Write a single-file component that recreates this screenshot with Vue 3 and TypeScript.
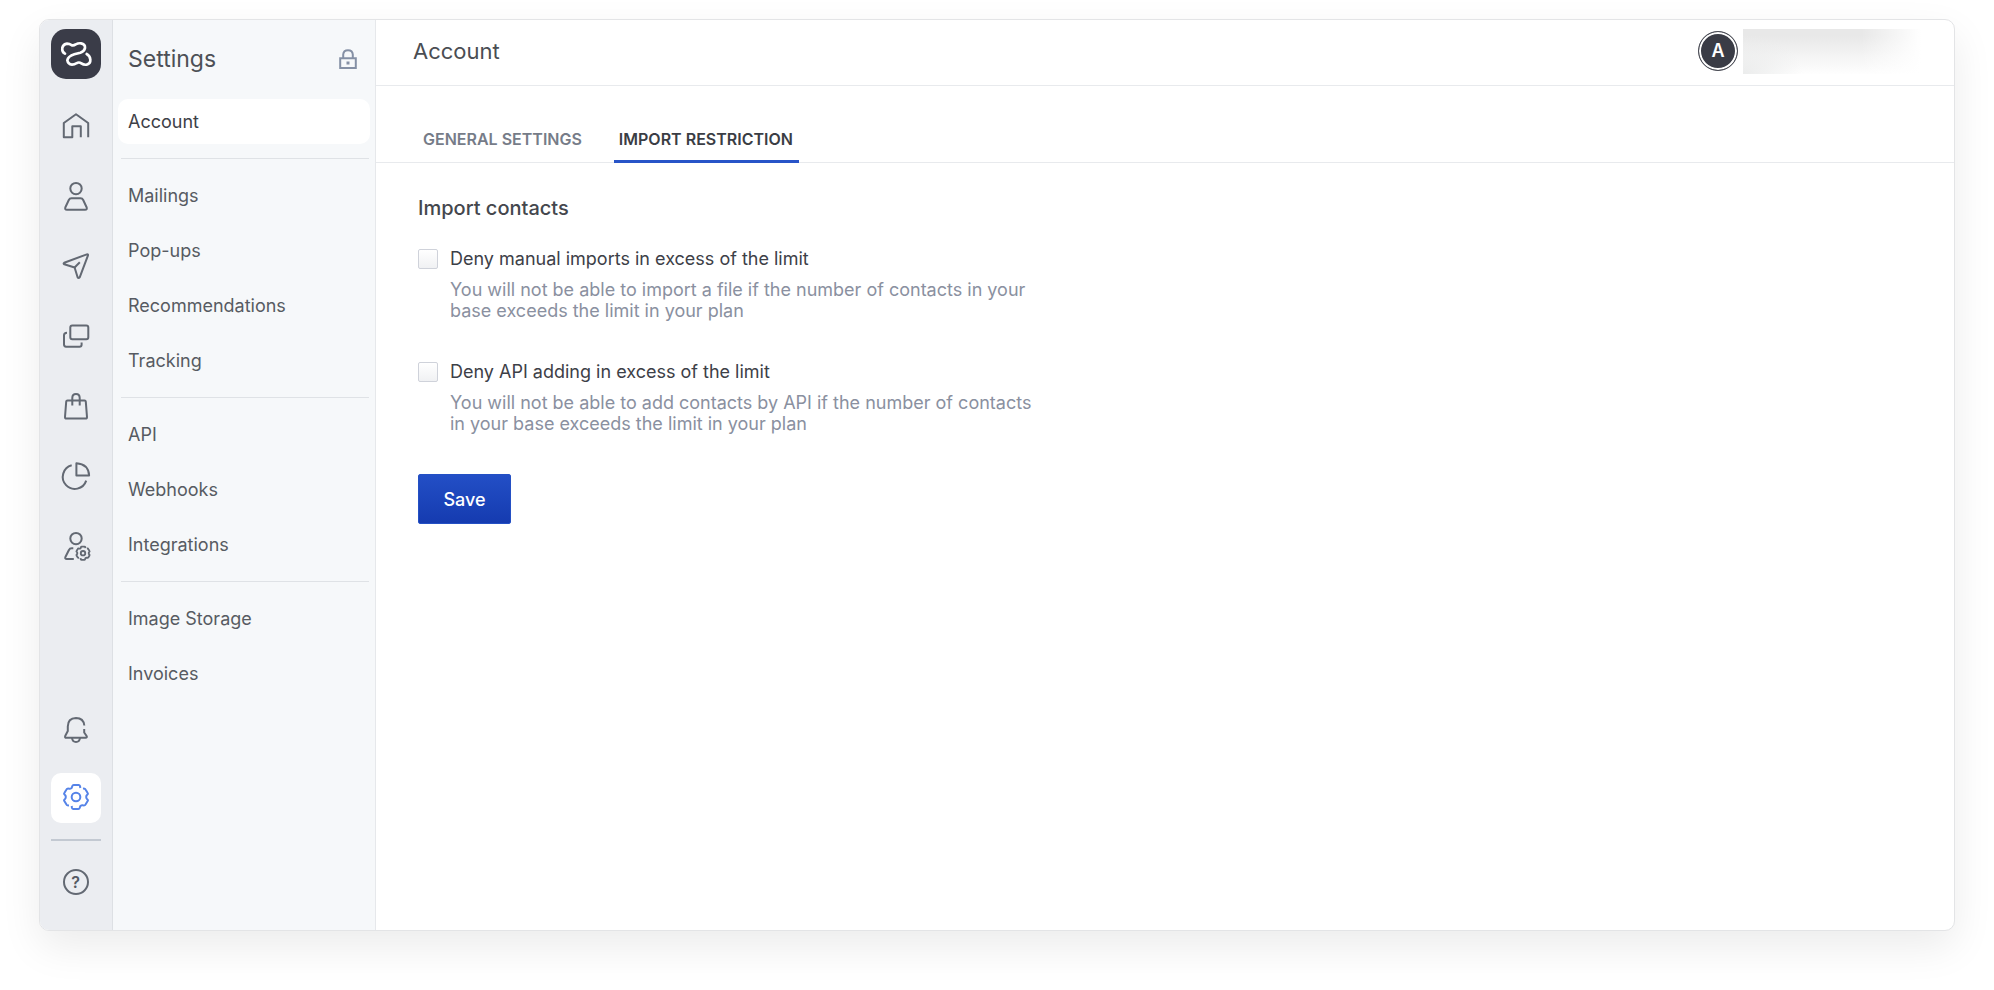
<script setup lang="ts">
import { ref } from 'vue'

interface RailItem {
  name: string
  paths: string[]
  circle?: [number, number, number]
  gear?: boolean
}

const railItems: RailItem[] = [
  { name: 'Home', paths: ['M17.8 24.3V13.3H9.3V24.3H.8V10L13 1.2L25.2 10V24.3'] },
  {
    name: 'Contacts',
    paths: ['M8.5 15.3H17.5Q19.4 15.3 20.2 17L23.6 24.2Q24.5 26.8 22 26.8H4Q1.5 26.8 2.4 24.2L5.8 17Q6.6 15.3 8.5 15.3Z'],
    circle: [13, 5.6, 5.7],
  },
  {
    name: 'Messages',
    paths: [
      'M1.2 9.8L23.8 1.4Q25.4 1 24.9 2.6L16.8 24.2Q15.5 26 14.6 24.2L11.6 14.5L1.3 11.3Q0 10.6 1.2 9.8Z',
      'M11.6 14.5L16.8 9.3',
    ],
  },
  {
    name: 'Pop-ups',
    paths: [
      'M9.3 2.5H23.3Q25.3 2.5 25.3 4.5V14.3Q25.3 16.3 23.3 16.3H9.3Q7.3 16.3 7.3 14.3V4.5Q7.3 2.5 9.3 2.5Z',
      'M4 9.8Q1 9.8 1 12.3V21.6Q1 23.7 3 23.7H16.5Q18.6 23.7 18.6 21.7V19.5',
    ],
  },
  {
    name: 'Shop',
    paths: [
      'M4.5 7.5H21.5Q22.7 7.5 22.8 8.7L24 24Q24 25.6 22.5 25.6H3.5Q2 25.6 2 24L3.2 8.7Q3.3 7.5 4.5 7.5Z',
      'M9.3 12.5V5Q9.3 1 13 1Q16.7 1 16.7 5V12.5',
    ],
  },
  { name: 'Reports', paths: ['M13.4 .3V12.5H26.1Q25.6 1.3 13.4 .3Z', 'M8.7 2.3A12 12 0 1 0 23.2 17.6'] },
  {
    name: 'Users',
    paths: ['M10.3 15.3H8.8Q6.7 15.3 5.8 17.2L2.4 24Q1.6 26 3.8 26H10.8'],
    circle: [13, 5.6, 5.7],
    gear: true,
  },
]

const navGroups: string[][] = [
  ['Account'],
  ['Mailings', 'Pop-ups', 'Recommendations', 'Tracking'],
  ['API', 'Webhooks', 'Integrations'],
  ['Image Storage', 'Invoices'],
]
const currentPage = ref('Account')

const tabs = ['GENERAL SETTINGS', 'IMPORT RESTRICTION']
const currentTab = ref(tabs[1])

const options = ref([
  {
    id: 'deny-manual',
    label: 'Deny manual imports in excess of the limit',
    text: 'You will not be able to import a file if the number of contacts in your base exceeds the limit in your plan',
    checked: false,
  },
  {
    id: 'deny-api',
    label: 'Deny API adding in excess of the limit',
    text: 'You will not be able to add contacts by API if the number of contacts in your base exceeds the limit in your plan',
    checked: false,
  },
])

// One half of the cog outline; the other half is the same path turned by 180 degrees.
const gearHalf =
  'M52 12L51 6Q50 3 47 3H32Q29 3 28 6L26 12Q22 15 18 14Q12 13 10 17L4 27Q2 30 6 33Q9 36 8 39Q9 42 6 45Q2 48 4 51L10 61Q12 65 18 64'
</script>

<template>
  <div class="page">
    <div class="frame">
      <nav class="rail" aria-label="Main">
        <a class="logo" href="#" aria-label="Start page">
          <svg viewBox="0 0 150 150" width="50" height="50">
            <path
              d="M42 74Q32 69 34 56Q37 45 48 44Q56 44 61 48Q67 51 74 46Q82 42 90 43Q103 45 102 57Q100 67 88 71L70 76Q51 82 49 94Q51 106 63 107Q71 107 76 103Q84 98 91 103Q98 108 107 107Q119 104 118 92Q117 80 107 75"
            />
          </svg>
        </a>
        <div class="rail-items">
          <a v-for="item in railItems" :key="item.name" class="rail-item" href="#" :aria-label="item.name">
            <svg class="icon" viewBox="0 0 26 26" width="26" height="26">
              <circle v-if="item.circle" :cx="item.circle[0]" :cy="item.circle[1]" :r="item.circle[2]" />
              <path v-for="d in item.paths" :key="d" :d="d" />
              <g v-if="item.gear" class="mini-gear" transform="translate(12.8 13) scale(.185)">
                <path :d="gearHalf" />
                <path :d="gearHalf" transform="rotate(180 39 39)" />
                <circle cx="39" cy="39" r="12" />
              </g>
            </svg>
          </a>
        </div>
        <div class="rail-bottom">
          <button class="rail-button" type="button" aria-label="Notifications">
            <svg class="icon" viewBox="0 0 26 26" width="26" height="26">
              <path
                d="M21.3 8.5Q20.6 1 13 1Q4.8 1.3 4.8 9.5V14L2.2 19Q1.5 20.8 3.5 20.8H22.5Q24.5 20.8 23.6 19L21.2 15.5V12"
              />
              <path d="M9 21Q9.5 25 13 25Q16.5 25 17 21" />
            </svg>
          </button>
          <a class="rail-button active" href="#" aria-label="Settings">
            <svg class="gear" viewBox="0 0 78 78" width="26" height="26">
              <path :d="gearHalf" />
              <path :d="gearHalf" transform="rotate(180 39 39)" />
              <circle cx="39" cy="39" r="13" />
            </svg>
          </a>
          <hr class="rail-line" />
          <button class="rail-button" type="button" aria-label="Help"><span class="help">?</span></button>
        </div>
      </nav>

      <aside class="sidebar">
        <div class="sidebar-head">
          <h2>Settings</h2>
          <svg class="lock" viewBox="0 0 18 20" width="18" height="20">
            <path d="M1.2 9.2H16.8V18.9H1.2ZM4.2 9V5.5Q4.5 1.2 9 1.2Q13.5 1.2 13.8 5.5V9" />
            <path class="keyhole" d="M9 12.5V15.5" />
          </svg>
        </div>
        <ul v-for="(group, i) in navGroups" :key="i" class="nav-group">
          <li v-for="name in group" :key="name">
            <a href="#" :class="{ current: name === currentPage }" @click.prevent="currentPage = name">{{ name }}</a>
          </li>
        </ul>
      </aside>

      <main class="main">
        <header class="header">
          <h1>Account</h1>
          <div class="user">
            <span class="avatar">A</span>
            <span class="user-name"></span>
          </div>
        </header>
        <div class="tabs" role="tablist">
          <button
            v-for="tab in tabs"
            :key="tab"
            type="button"
            role="tab"
            :aria-selected="tab === currentTab"
            :class="{ selected: tab === currentTab }"
            @click="currentTab = tab"
          >
            {{ tab }}
          </button>
        </div>
        <form class="content" @submit.prevent>
          <h3>Import contacts</h3>
          <div v-for="option in options" :key="option.id" class="option">
            <input :id="option.id" v-model="option.checked" type="checkbox" />
            <label :for="option.id">{{ option.label }}</label>
            <p>{{ option.text }}</p>
          </div>
          <button class="save" type="submit">Save</button>
        </form>
      </main>
    </div>
  </div>
</template>

<style>
body {
  margin: 0;
  background: #fff;
}
</style>

<style scoped>
.page {
  padding: 19px 39px 59px;
  font-family: Inter, "Liberation Sans", sans-serif;
  font-size: 18px;
  color: #3d4047;
}
.page *,
.page {
  box-sizing: border-box;
}
.frame {
  display: flex;
  min-height: calc(100vh - 78px);
  border: 1px solid #e3e4e6;
  border-radius: 10px;
  background: #fff;
  overflow: hidden;
  box-shadow: 0 16px 40px rgba(0, 0, 0, 0.08);
}
h1,
h2,
h3,
p,
ul {
  margin: 0;
  padding: 0;
  font-weight: 400;
}
a {
  color: inherit;
  text-decoration: none;
}
button {
  border: 0;
  background: none;
  font: inherit;
  color: inherit;
  cursor: pointer;
}

.rail {
  display: flex;
  flex-direction: column;
  align-items: center;
  flex: none;
  width: 73px;
  padding: 9px 0 23px;
  border-right: 1px solid #dde0e4;
  background: #ebedf1;
}
.logo {
  display: block;
  width: 50px;
  height: 50px;
  border-radius: 15px;
  background: #3a3c48;
}
.logo path {
  fill: none;
  stroke: #fff;
  stroke-width: 8;
  stroke-linecap: round;
  stroke-linejoin: round;
}
.rail-items {
  display: flex;
  flex-direction: column;
  margin-top: 12px;
}
.rail-item {
  display: flex;
  align-items: center;
  justify-content: center;
  width: 50px;
  height: 70px;
  padding-right: 1px;
}
.icon {
  overflow: visible;
  fill: none;
  stroke: #636973;
  stroke-width: 2;
  stroke-linejoin: round;
}
.mini-gear {
  stroke-width: 10;
}
.rail-bottom {
  display: flex;
  flex-direction: column;
  align-items: center;
  margin-top: auto;
}
.rail-button {
  display: flex;
  align-items: center;
  justify-content: center;
  width: 50px;
  height: 50px;
  padding: 0 1px 0 0;
  border-radius: 10px;
}
.rail-button.active {
  margin-top: 18px;
  padding-bottom: 2px;
  background: #fff;
}
.gear {
  fill: none;
  stroke: #5583e8;
  stroke-width: 6;
  stroke-linejoin: round;
}
.rail-line {
  width: 50px;
  height: 2px;
  margin: 16px 0;
  border: 0;
  background: #c3c9d2;
}
.help {
  width: 26px;
  height: 26px;
  border: 2px solid #636973;
  border-radius: 50%;
  font-size: 16px;
  font-weight: 600;
  line-height: 22px;
  text-align: center;
  color: #555a63;
}

.sidebar {
  flex: none;
  width: 263px;
  padding: 0 5px;
  border-right: 1px solid #e6e8eb;
  background: #f6f8fa;
}
.sidebar-head {
  display: flex;
  align-items: center;
  justify-content: space-between;
  height: 79px;
  padding: 0 13px 2px 10px;
}
.sidebar-head h2 {
  font-size: 23px;
  color: #4d5056;
}
.lock {
  fill: none;
  stroke: #8590a5;
  stroke-width: 2;
}
.keyhole {
  stroke-width: 3;
}
.nav-group {
  display: flex;
  flex-direction: column;
  gap: 10px;
  list-style: none;
}
.nav-group + .nav-group::before {
  content: "";
  height: 1px;
  margin: 14px 1px 4px 3px;
  background: #dfe2e6;
}
.nav-group a {
  display: block;
  height: 45px;
  padding: 0 10px;
  border-radius: 10px;
  line-height: 46px;
  color: #575b62;
}
.nav-group a.current {
  background: #fff;
  color: #3d4047;
}

.main {
  flex: 1;
  min-width: 0;
}
.header {
  display: flex;
  align-items: center;
  justify-content: space-between;
  height: 66px;
  padding: 0 29px 3px 37px;
  border-bottom: 1px solid #e8eaed;
}
.header h1 {
  font-size: 22px;
  color: #4a4d53;
}
.user {
  display: flex;
  align-items: center;
  gap: 5px;
}
.avatar {
  width: 40px;
  height: 40px;
  border: 1px solid #4a4c55;
  border-radius: 50%;
  box-shadow: inset 0 0 0 2px #fff;
  background: #3a3c46;
  font-weight: 600;
  line-height: 38px;
  text-align: center;
  color: #fff;
}
.user-name {
  width: 182px;
  height: 45px;
  background:
    linear-gradient(90deg, rgba(255, 255, 255, 0) 65%, #fff 98%),
    radial-gradient(60px 40px at 0 100%, #ebecec, rgba(235, 236, 236, 0)),
    linear-gradient(#e8e8e8 15%, #f4f4f4 60%, #fefefe);
}

.tabs {
  display: flex;
  align-items: flex-end;
  gap: 26px;
  height: 77px;
  padding-left: 42px;
  border-bottom: 1px solid #e8eaed;
}
.tabs button {
  margin-bottom: -1px;
  padding: 0 6px 9px 5px;
  border-bottom: 3px solid transparent;
  font-size: 16px;
  font-weight: 600;
  line-height: 24px;
  color: #767c88;
}
.tabs button.selected {
  border-bottom-color: #2854c8;
  color: #3a3d44;
}

.content {
  padding: 33px 42px;
}
.content h3 {
  margin-bottom: 27px;
  font-size: 20px;
  font-weight: 500;
  line-height: 24px;
  color: #44474d;
}
.option {
  display: grid;
  grid-template-columns: 20px 1fr;
  align-items: center;
  column-gap: 12px;
  row-gap: 8px;
  max-width: 622px;
  margin-bottom: 39px;
}
.option input {
  appearance: none;
  width: 20px;
  height: 20px;
  margin: 0;
  border: 1px solid #cfd2da;
  border-radius: 2px;
  background: linear-gradient(#fff, #f0f1f3);
}
.option input:checked {
  background: #2854c8;
}
.option label {
  line-height: 24px;
  color: #3d4047;
}
.option p {
  grid-column: 2;
  line-height: 21px;
  color: #8a90a0;
}
.save {
  width: 93px;
  height: 50px;
  margin-top: 1px;
  border: 1px solid #2450c4;
  border-radius: 2px;
  background: linear-gradient(#234fc6, #153bb0);
  font-weight: 500;
  color: #fff;
}
</style>
